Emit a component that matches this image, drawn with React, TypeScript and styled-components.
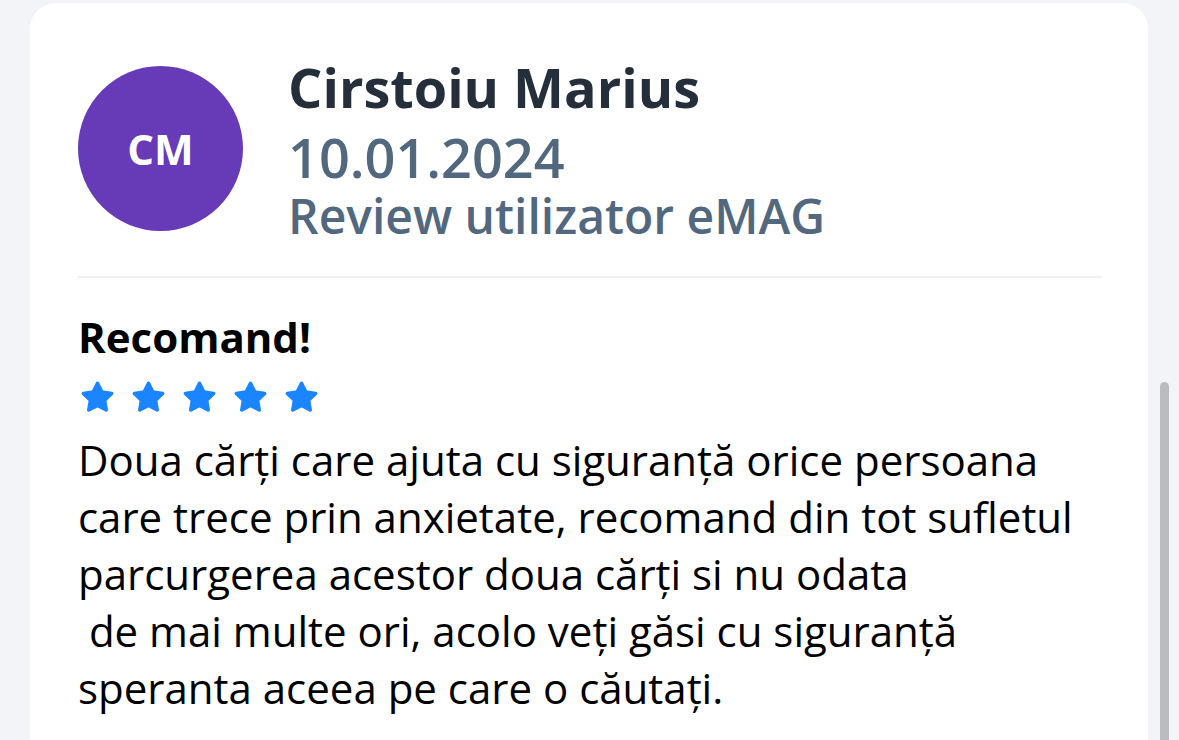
import React from "react";
import styled, { createGlobalStyle } from "styled-components";

const GlobalStyle = createGlobalStyle`
  html, body {
    margin: 0;
    padding: 0;
    background: #f3f4f8;
    overflow: hidden;
  }
  body {
    font-family: "Open Sans", "Noto Sans", sans-serif;
  }
`;

const Page = styled.div`
  padding: 3px 31px 0 30px;
  min-height: 740px;
  box-sizing: border-box;
`;

const Card = styled.article`
  background: #ffffff;
  border-radius: 26px 26px 0 0;
  padding: 49px 46px 40px 48px;
  min-height: 760px;
  box-sizing: border-box;
`;

const Header = styled.header`
  display: flex;
  align-items: center;
  gap: 45px;
  padding-bottom: 37px;
  border-bottom: 2px solid #eef0f3;
`;

const Avatar = styled.div`
  flex: 0 0 165px;
  width: 165px;
  height: 165px;
  border-radius: 50%;
  background: #673ab7;
  color: #ffffff;
  display: flex;
  align-items: center;
  justify-content: center;
  font-weight: 700;
  font-size: 42px;
  margin-top: 5px;
`;

const Meta = styled.div`
  display: flex;
  flex-direction: column;
`;

const Name = styled.div`
  font-size: 54px;
  line-height: 70px;
  font-weight: 700;
  color: #252f3b;
`;

const MetaLine = styled.div<{ $size: number; $lh: number }>`
  font-size: ${(p) => p.$size}px;
  line-height: ${(p) => p.$lh}px;
  font-weight: 600;
  color: #52687f;
`;

const Body = styled.section`
  padding-top: 34px;
`;

const Title = styled.h3`
  margin: 0;
  font-size: 42px;
  line-height: 50px;
  font-weight: 700;
  color: #000000;
`;

const Stars = styled.div`
  display: flex;
  gap: 16px;
  margin-top: 18px;
  margin-left: 2px;
  margin-bottom: 16px;
`;

const StarIcon = styled.svg`
  width: 35px;
  height: 35px;
  display: block;
`;

const Text = styled.p`
  margin: 0;
  font-size: 42px;
  line-height: 57px;
  color: #000000;
  white-space: pre-wrap;
`;

const ScrollThumb = styled.div`
  position: fixed;
  left: 1160px;
  top: 382px;
  width: 9px;
  bottom: -10px;
  border-radius: 5px;
  background: #bcbcbe;
`;

const Star = () => (
  <StarIcon viewBox="0 0 24 24" aria-hidden="true">
    <path
      d="M12 2.2l3 6.1 6.7.95-4.85 4.7 1.15 6.65L12 17.45l-6 3.15 1.15-6.65L2.3 9.25 9 8.3z"
      fill="#1a85ff"
      stroke="#1a85ff"
      strokeWidth="2.4"
      strokeLinejoin="round"
    />
  </StarIcon>
);

const reviewText =
  "Doua cărți care ajuta cu siguranță orice persoana care trece prin anxietate, recomand din tot sufletul parcurgerea acestor doua cărți si nu odata\n de mai multe ori, acolo veți găsi cu siguranță speranta aceea pe care o căutați.";

export default function App() {
  return (
    <>
      <GlobalStyle />
      <Page>
        <Card>
          <Header>
            <Avatar>CM</Avatar>
            <Meta>
              <Name>Cirstoiu Marius</Name>
              <MetaLine $size={54} $lh={71}>10.01.2024</MetaLine>
              <MetaLine $size={48} $lh={46}>Review utilizator eMAG</MetaLine>
            </Meta>
          </Header>
          <Body>
            <Title>Recomand!</Title>
            <Stars>
              {[0, 1, 2, 3, 4].map((i) => (
                <Star key={i} />
              ))}
            </Stars>
            <Text>{reviewText}</Text>
          </Body>
        </Card>
      </Page>
      <ScrollThumb />
    </>
  );
}
